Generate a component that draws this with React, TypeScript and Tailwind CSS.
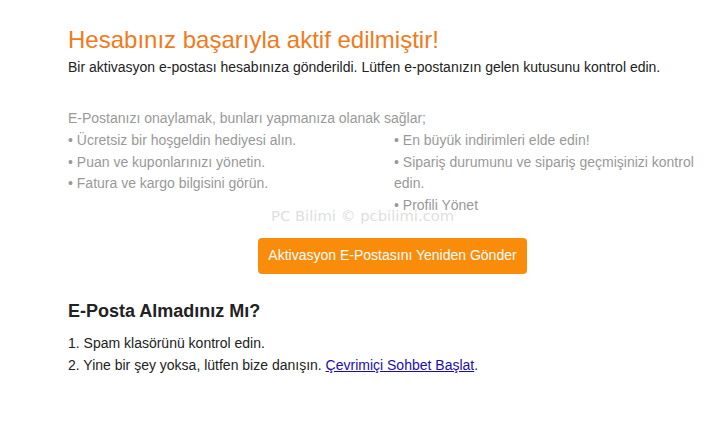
import React from 'react';

const leftItems = [
  'Ücretsiz bir hoşgeldin hediyesi alın.',
  'Puan ve kuponlarınızı yönetin.',
  'Fatura ve kargo bilgisini görün.',
];

const rightItems = [
  'En büyük indirimleri elde edin!',
  'Sipariş durumunu ve sipariş geçmişinizi kontrol edin.',
  'Profili Yönet',
];

export default function App() {
  return (
    <div className="relative min-h-[426px] w-[723px] bg-white pl-[68px] pr-[20px] pt-[24px] font-['Liberation_Sans',Arial,sans-serif]">
      {/* Header */}
      <h1 className="text-[24px] leading-[32px] text-[#f27a1a]">Hesabınız başarıyla aktif edilmiştir!</h1>
      <p className="mt-[1px] text-[14px] leading-[20px] text-[#222]">
        Bir aktivasyon e-postası hesabınıza gönderildi. Lütfen e-postanızın gelen kutusunu kontrol edin.
      </p>

      {/* Benefits */}
      <div className="mt-[31px] text-[14px] leading-[21.75px] text-[#999]">
        <p>E-Postanızı onaylamak, bunları yapmanıza olanak sağlar;</p>
        <div className="grid grid-cols-[326px_1fr]">
          <ul>
            {leftItems.map((t) => (
              <li key={t}>• {t}</li>
            ))}
          </ul>
          <ul>
            {rightItems.map((t) => (
              <li key={t}>• {t}</li>
            ))}
          </ul>
        </div>
      </div>

      <div className="mt-[21px] flex justify-center">
        <button className="ml-[14px] h-[36px] rounded-[4px] bg-[#f98c0b] px-[10px] text-[14px] text-white">
          Aktivasyon E-Postasını Yeniden Gönder
        </button>
      </div>

      {/* Help */}
      <h2 className="mt-[25px] text-[18px] font-bold leading-[24px] text-[#222]">E-Posta Almadınız Mı?</h2>
      <ol className="mt-[9px] text-[14px] leading-[22px] text-[#222]">
        <li>1. Spam klasörünü kontrol edin.</li>
        <li>
          2. Yine bir şey yoksa, lütfen bize danışın.{' '}
          <a href="#" className="text-[#1a0dab] underline">Çevrimiçi Sohbet Başlat</a>.
        </li>
      </ol>

      {/* Watermark */}
      <div className="pointer-events-none absolute left-[271px] top-[205px] font-['DejaVu_Sans',sans-serif] text-[14.8px] text-[#e0e0e0]">
        PC Bilimi © pcbilimi.com
      </div>
    </div>
  );
}
